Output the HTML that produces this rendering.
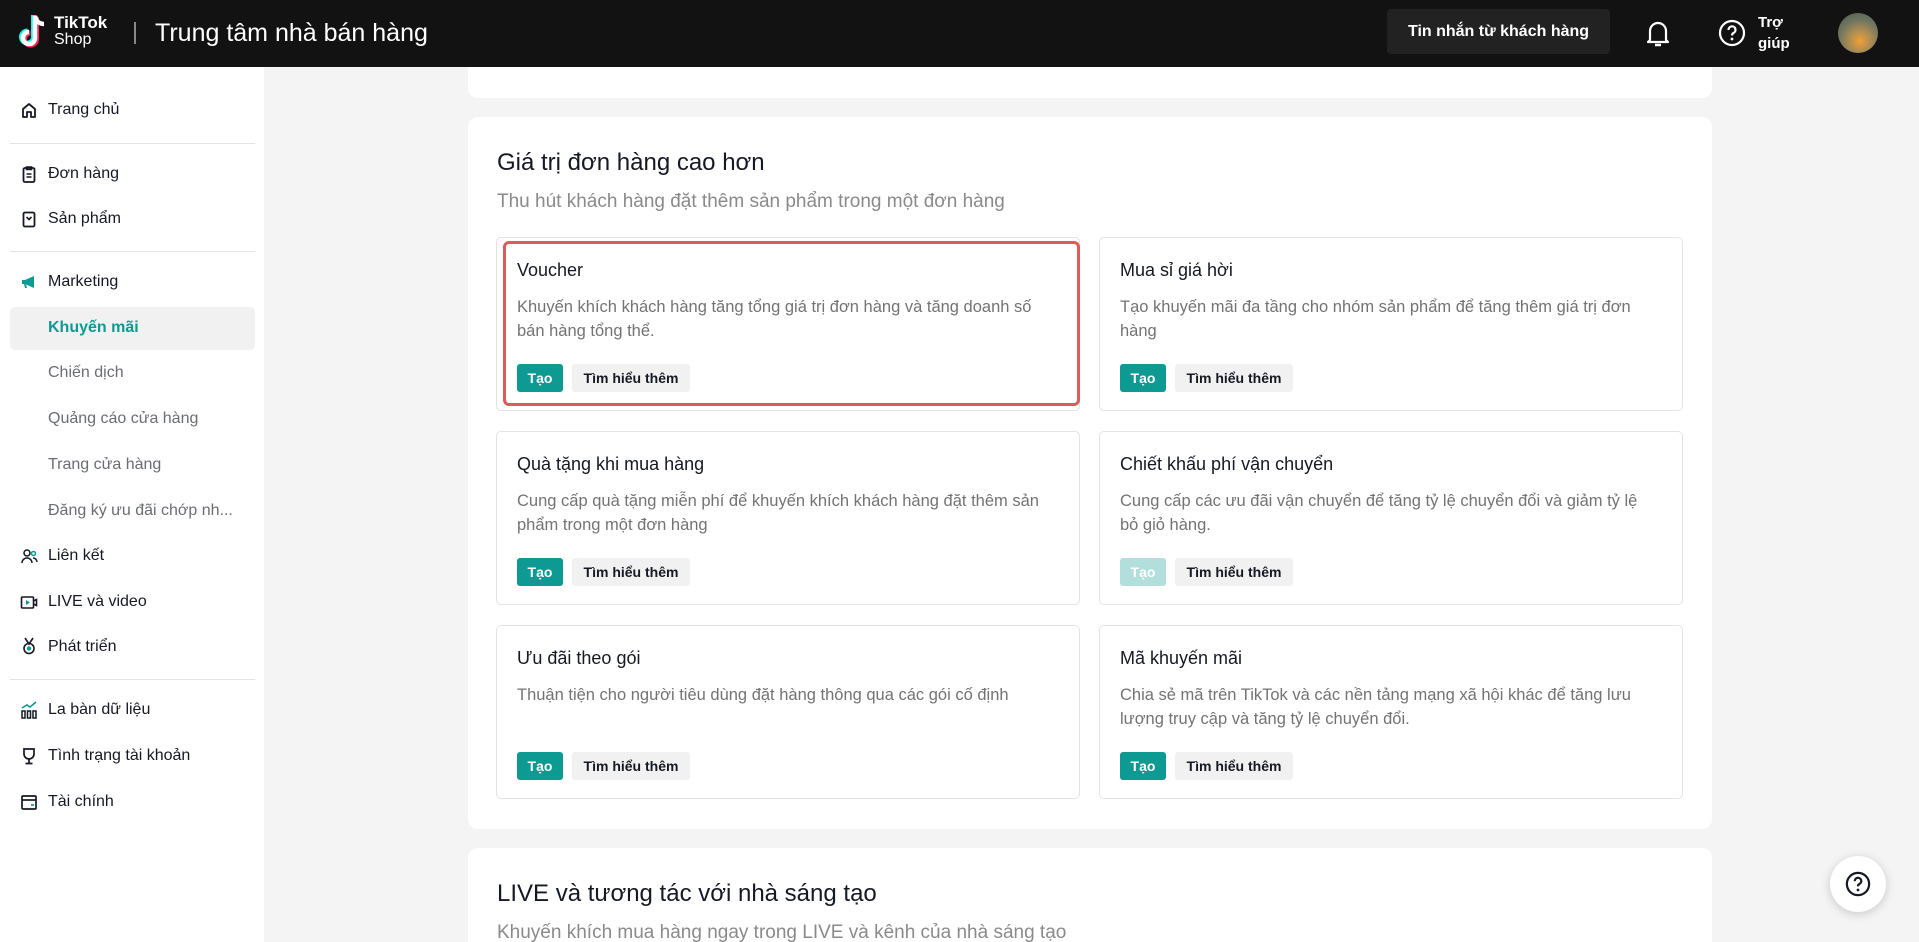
<!DOCTYPE html>
<html><head><meta charset="utf-8"><style>
*{box-sizing:border-box;margin:0;padding:0}
html{width:1919px;height:942px;overflow:hidden}
body{width:1919px;height:942px;overflow:hidden;background:#f4f4f4;font-family:"Liberation Sans","Noto Sans CJK SC",sans-serif;position:relative;color:#161823}
.hdr{position:absolute;left:0;top:0;width:1919px;height:67px;background:#121212;color:#fff;z-index:10}
.side{position:absolute;left:0;top:67px;width:264px;height:875px;background:#fff}
.it{position:absolute;left:48px;font-size:16px;color:#161823;line-height:20px}
.sub{color:#6b6d73}
.ic{position:absolute;left:20px;width:18px;height:18px}
.div{position:absolute;left:10px;width:245px;height:1px;background:#e3e3e3}
.card{position:absolute;left:468px;width:1244px;background:#fff;border-radius:10px;overflow:hidden}
.sc{position:absolute;width:584px;height:174px;border:1px solid #e3e3e3;border-radius:5px;background:#fff}
.sc h3{position:absolute;left:20px;top:22px;font-size:18px;font-weight:normal;color:#161823}
.sc p{position:absolute;left:20px;top:57px;width:540px;font-size:16.5px;line-height:24px;color:#737373}
.b1{position:absolute;left:20px;top:126px;width:46px;height:28px;background:#0d9a93;color:#fff;border-radius:3px;font-size:14px;font-weight:bold;text-align:center;line-height:28px}
.b2{position:absolute;left:75px;top:126px;width:118px;height:28px;background:#f1f1f1;color:#161823;border-radius:3px;font-size:14px;font-weight:bold;text-align:center;line-height:28px}
</style></head><body>
<div class="hdr">
 <svg style="position:absolute;left:19px;top:14px" width="28" height="36" viewBox="0 0 28 36"><path d="M16 2v22a6 6 0 1 1-6-6" fill="none" stroke="#25f4ee" stroke-width="5" transform="translate(-1.5,-1)"/><path d="M16 2v22a6 6 0 1 1-6-6" fill="none" stroke="#fe2c55" stroke-width="5" transform="translate(1.5,1)"/><path d="M16 2v22a6 6 0 1 1-6-6M16 2c1 5 4 8 9 8" fill="none" stroke="#fff" stroke-width="4.5"/></svg>
 <div style="position:absolute;left:54px;top:14px;font-size:17px;font-weight:bold;line-height:18px">TikTok</div>
 <div style="position:absolute;left:54px;top:31px;font-size:16px;line-height:18px">Shop</div>
 <div style="position:absolute;left:134px;top:22px;width:2px;height:22px;background:#888"></div>
 <div style="position:absolute;left:155px;top:17px;font-size:25px;line-height:32px">Trung tâm nhà bán hàng</div>
 <div style="position:absolute;left:1387px;top:9px;width:223px;height:45px;background:#222;border-radius:4px;font-size:16px;font-weight:bold;text-align:center;line-height:45px">Tin nhắn từ khách hàng</div>
 <svg style="position:absolute;left:1645px;top:18px" width="26" height="30" viewBox="0 0 26 30"><path d="M5 22V13a8 8 0 0 1 16 0v9l2 2H3z" fill="none" stroke="#fff" stroke-width="2.2" stroke-linejoin="round"/><path d="M10 27h6" stroke="#fff" stroke-width="2.5"/></svg>
 <svg style="position:absolute;left:1718px;top:19px" width="28" height="28" viewBox="0 0 28 28"><circle cx="14" cy="14" r="12" fill="none" stroke="#fff" stroke-width="2.2"/><path d="M10.5 11a3.5 3.5 0 1 1 5 3c-1 .6-1.5 1.2-1.5 2.5" fill="none" stroke="#fff" stroke-width="2.2"/><circle cx="14" cy="20" r="1.4" fill="#fff"/></svg>
 <div style="position:absolute;left:1758px;top:12px;font-size:15px;font-weight:bold;line-height:21px">Trợ<br>giúp</div>
 <div style="position:absolute;left:1838px;top:13px;width:40px;height:40px;border-radius:50%;background:radial-gradient(circle at 55% 70%,#f0a030 0,#b89050 25%,#6f7560 60%,#4a5a50 100%)"></div>
</div>
<div class="side">
 <svg class="ic" style="top:34px" viewBox="0 0 18 18"><path d="M3 8l6-5 6 5v8H11v-5H7v5H3z" fill="none" stroke="#161823" stroke-width="1.8" stroke-linejoin="round"/></svg>
 <div class="it" style="top:33px">Trang chủ</div>
 <div class="div" style="top:76px"></div>
 <svg class="ic" style="top:98px" viewBox="0 0 18 18"><rect x="3.5" y="3" width="11" height="14" rx="1.5" fill="none" stroke="#161823" stroke-width="1.8"/><path d="M6.5 2h5v2.5h-5zM6.5 9h5M6.5 12h5" stroke="#161823" stroke-width="1.6" fill="none"/></svg>
 <div class="it" style="top:97px">Đơn hàng</div>
 <svg class="ic" style="top:143px" viewBox="0 0 18 18"><rect x="3.5" y="2.5" width="11" height="14" rx="1.5" fill="none" stroke="#161823" stroke-width="1.8"/><path d="M6.5 7l2.5 2.5L11.5 7" stroke="#161823" stroke-width="1.6" fill="none"/></svg>
 <div class="it" style="top:142px">Sản phẩm</div>
 <div class="div" style="top:184px"></div>
 <svg class="ic" style="top:206px" viewBox="0 0 18 18"><path d="M2 7h3l9-4v12L5 11H2z M4 11l1 4h2l-1-4" fill="#0d9a93"/></svg>
 <div class="it" style="top:205px">Marketing</div>
 <div style="position:absolute;left:10px;top:240px;width:245px;height:43px;background:#f1f1f1;border-radius:5px"></div>
 <div class="it" style="top:251px;color:#0d9a93;font-weight:bold">Khuyến mãi</div>
 <div class="it sub" style="top:296px">Chiến dịch</div>
 <div class="it sub" style="top:342px">Quảng cáo cửa hàng</div>
 <div class="it sub" style="top:388px">Trang cửa hàng</div>
 <div class="it sub" style="top:434px">Đăng ký ưu đãi chớp nh...</div>
 <svg class="ic" style="top:480px" viewBox="0 0 18 18"><circle cx="7" cy="6" r="3" fill="none" stroke="#161823" stroke-width="1.5"/><path d="M2 16a5 5 0 0 1 10 0" fill="none" stroke="#161823" stroke-width="1.5"/><circle cx="13.5" cy="6.5" r="2" fill="none" stroke="#0d9a93" stroke-width="1.5"/><path d="M13 11a4 4 0 0 1 4 4" fill="none" stroke="#161823" stroke-width="1.5"/></svg>
 <div class="it" style="top:479px">Liên kết</div>
 <svg class="ic" style="top:526px" viewBox="0 0 18 18"><rect x="1.5" y="4" width="12" height="11" rx="1" fill="none" stroke="#161823" stroke-width="1.6"/><path d="M13.5 8l3-1.5v6l-3-1.5" fill="none" stroke="#161823" stroke-width="1.6"/><path d="M6 7v5l4-2.5z" fill="#0d9a93"/></svg>
 <div class="it" style="top:525px">LIVE và video</div>
 <svg class="ic" style="top:570px" viewBox="0 0 18 18"><path d="M5 1l4 6 4-6" fill="none" stroke="#161823" stroke-width="1.6"/><circle cx="9" cy="11.5" r="5" fill="none" stroke="#161823" stroke-width="1.6"/><circle cx="9" cy="11.5" r="2.2" fill="#0d9a93"/></svg>
 <div class="it" style="top:570px">Phát triển</div>
 <div class="div" style="top:612px"></div>
 <svg class="ic" style="top:634px" viewBox="0 0 18 18"><path d="M2 10h3v7H2zM7.5 10h3v7h-3zM13 10h3v7h-3z" fill="none" stroke="#161823" stroke-width="1.5"/><path d="M2 7l5-3 3 2 6-5" fill="none" stroke="#0d9a93" stroke-width="1.6"/></svg>
 <div class="it" style="top:633px">La bàn dữ liệu</div>
 <svg class="ic" style="top:680px" viewBox="0 0 18 18"><path d="M4 2h10v5a5 5 0 0 1-10 0z" fill="none" stroke="#161823" stroke-width="1.7"/><path d="M9 12v4M5.5 16.5h7" stroke="#161823" stroke-width="1.7"/></svg>
 <div class="it" style="top:679px">Tình trạng tài khoản</div>
 <svg class="ic" style="top:726px" viewBox="0 0 18 18"><rect x="2" y="3" width="14" height="13" rx="1" fill="none" stroke="#161823" stroke-width="1.7"/><path d="M2 7h14" stroke="#161823" stroke-width="1.7"/><path d="M11 12h3" stroke="#0d9a93" stroke-width="1.7"/></svg>
 <div class="it" style="top:725px">Tài chính</div>
</div>
<div class="card" style="top:40px;height:58px"></div>
<div class="card" style="top:117px;height:712px">
 <div style="position:absolute;left:29px;top:31px;font-size:24px;line-height:30px">Giá trị đơn hàng cao hơn</div>
 <div style="position:absolute;left:29px;top:73px;font-size:19px;line-height:24px;color:#8a8a8a">Thu hút khách hàng đặt thêm sản phẩm trong một đơn hàng</div>
 <div class="sc" style="left:28px;top:120px"><h3>Voucher</h3><p>Khuyến khích khách hàng tăng tổng giá trị đơn hàng và tăng doanh số bán hàng tổng thể.</p><div class="b1">Tạo</div><div class="b2">Tìm hiểu thêm</div></div>
 <div class="sc" style="left:631px;top:120px"><h3>Mua sỉ giá hời</h3><p>Tạo khuyến mãi đa tầng cho nhóm sản phẩm để tăng thêm giá trị đơn hàng</p><div class="b1">Tạo</div><div class="b2">Tìm hiểu thêm</div></div>
 <div style="position:absolute;left:35px;top:124px;width:577px;height:165px;border:3.5px solid #e05a5a;border-radius:6px"></div>
 <div class="sc" style="left:28px;top:314px"><h3>Quà tặng khi mua hàng</h3><p>Cung cấp quà tặng miễn phí để khuyến khích khách hàng đặt thêm sản phẩm trong một đơn hàng</p><div class="b1">Tạo</div><div class="b2">Tìm hiểu thêm</div></div>
 <div class="sc" style="left:631px;top:314px"><h3>Chiết khấu phí vận chuyển</h3><p>Cung cấp các ưu đãi vận chuyển để tăng tỷ lệ chuyển đổi và giảm tỷ lệ bỏ giỏ hàng.</p><div class="b1" style="background:#b2dfdc">Tạo</div><div class="b2">Tìm hiểu thêm</div></div>
 <div class="sc" style="left:28px;top:508px"><h3>Ưu đãi theo gói</h3><p>Thuận tiện cho người tiêu dùng đặt hàng thông qua các gói cố định</p><div class="b1">Tạo</div><div class="b2">Tìm hiểu thêm</div></div>
 <div class="sc" style="left:631px;top:508px"><h3>Mã khuyến mãi</h3><p>Chia sẻ mã trên TikTok và các nền tảng mạng xã hội khác để tăng lưu lượng truy cập và tăng tỷ lệ chuyển đổi.</p><div class="b1">Tạo</div><div class="b2">Tìm hiểu thêm</div></div>
</div>
<div class="card" style="top:848px;height:94px;border-radius:10px 10px 0 0">
 <div style="position:absolute;left:29px;top:31px;font-size:24px;line-height:30px">LIVE và tương tác với nhà sáng tạo</div>
 <div style="position:absolute;left:29px;top:73px;font-size:19px;line-height:24px;color:#8a8a8a">Khuyến khích mua hàng ngay trong LIVE và kênh của nhà sáng tạo</div>
</div>
<div style="position:absolute;left:1830px;top:856px;width:56px;height:56px;border-radius:50%;background:#fff;box-shadow:0 2px 10px rgba(0,0,0,.18)">
 <svg style="position:absolute;left:15px;top:15px" width="26" height="26" viewBox="0 0 28 28"><circle cx="14" cy="14" r="12" fill="none" stroke="#161823" stroke-width="2.4"/><path d="M10.5 11a3.5 3.5 0 1 1 5 3c-1 .6-1.5 1.2-1.5 2.5" fill="none" stroke="#161823" stroke-width="2.4"/><circle cx="14" cy="20.5" r="1.5" fill="#161823"/></svg>
</div>
</body></html>
